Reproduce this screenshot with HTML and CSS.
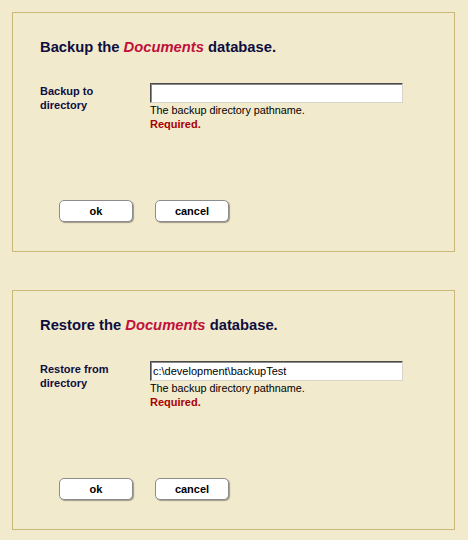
FILE: index.html
```html
<!DOCTYPE html>
<html>
<head>
<meta charset="utf-8">
<link rel="stylesheet" href="styles.css">
</head>
<body>
<div class="page">
  <section class="panel">
    <h2 class="title">Backup the <em class="db">Documents</em> database.</h2>
    <div class="row">
      <label class="label">Backup to<br>directory</label>
      <div class="field">
        <input class="input" type="text" value="">
        <div class="help">The backup directory pathname.</div>
        <div class="req">Required.</div>
      </div>
    </div>
    <div class="buttons">
      <button class="btn">ok</button>
      <button class="btn">cancel</button>
    </div>
  </section>
  <section class="panel">
    <h2 class="title">Restore the <em class="db">Documents</em> database.</h2>
    <div class="row">
      <label class="label">Restore from<br>directory</label>
      <div class="field">
        <input class="input" type="text" value="c:\development\backupTest">
        <div class="help">The backup directory pathname.</div>
        <div class="req">Required.</div>
      </div>
    </div>
    <div class="buttons">
      <button class="btn">ok</button>
      <button class="btn">cancel</button>
    </div>
  </section>
</div>
</body>
</html>
```
FILE: styles.css
```css
html, body {
  margin: 0;
  padding: 0;
  background: #f2eacd;
}
body {
  font-family: "Liberation Sans", Arial, sans-serif;
  font-size: 11px;
  color: #000;
}
.page {
  padding: 12px 13px 0 12px;
  display: flex;
  flex-direction: column;
  gap: 38px;
  width: 443px;
}
.panel {
  box-sizing: border-box;
  height: 240px;
  border: 1px solid #c9b878;
  padding: 26px 0 0 27px;
  display: flex;
  flex-direction: column;
}
.title {
  margin: 0;
  font-size: 14.75px;
  line-height: 16px;
  font-weight: bold;
  color: #0e0e40;
}
.db {
  color: #c0103a;
  font-style: italic;
}
.row {
  margin-top: 28px;
  display: flex;
}
.label {
  width: 110px;
  font-weight: bold;
  line-height: 14px;
  padding-top: 1px;
  color: #0e0e40;
}
.field {
  display: flex;
  flex-direction: column;
}
.input {
  box-sizing: border-box;
  width: 253px;
  height: 20px;
  margin: 0;
  padding: 0 2px;
  border: 1px solid;
  border-color: #4a4a4a #d8d4cc #d8d4cc #4a4a4a;
  box-shadow: inset 1px 1px 0 #8a8a8a;
  background: #fff;
  font-family: "Liberation Sans", Arial, sans-serif;
  font-size: 11px;
  color: #000;
  outline: none;
}
.help {
  line-height: 14px;
  font-size: 10.8px;
}
.req {
  line-height: 14px;
  font-weight: bold;
  color: #a80000;
}
.buttons {
  margin-top: 69px;
  padding-left: 19px;
  display: flex;
  gap: 22px;
}
.btn {
  box-sizing: border-box;
  width: 74px;
  height: 22px;
  margin: 0;
  padding: 0;
  background: #fff;
  border: 1px solid #8c8c8c;
  border-radius: 5px;
  box-shadow: 1px 1px 1px rgba(0,0,0,0.35);
  font-family: "Liberation Sans", Arial, sans-serif;
  font-size: 11px;
  font-weight: bold;
  color: #000;
}
```
